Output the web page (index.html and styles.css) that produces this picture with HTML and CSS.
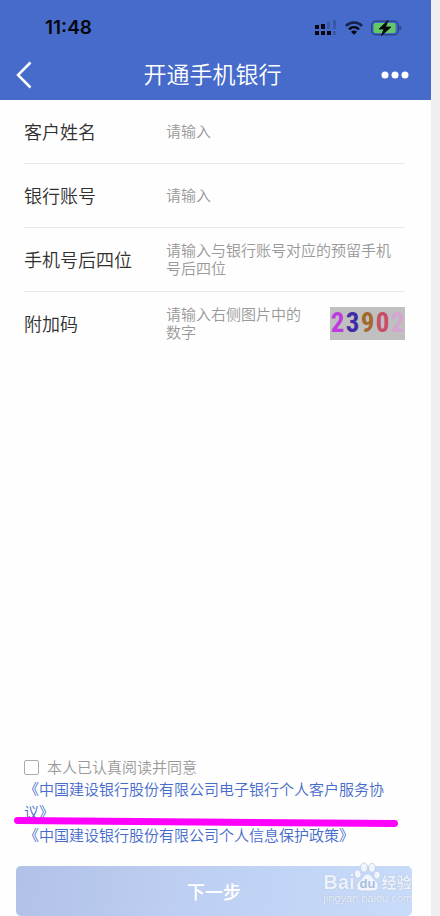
FILE: index.html
```html
<!DOCTYPE html>
<html lang="zh-CN">
<head>
<meta charset="utf-8">
<meta name="viewport" content="width=device-width, initial-scale=1">
<title>开通手机银行</title>
<link rel="stylesheet" href="styles.css">
</head>
<body>
<div class="screen">
  <header class="header">
    <div class="status">
      <span class="time">11:48</span>
      <div class="status-icons">
        <svg class="signal" width="22" height="16" viewBox="0 0 22 16" aria-hidden="true">
          <path d="M0 5h4v4H0zM6 4h4v5H6zM0 11h4v4H0zM6 11h4v4H6zM12 11h4v4h-4z" fill="#05070d"/>
          <path d="M12 2h3v7h-3zM18 0h3v9h-3zM18 11h3v4h-3z" fill="#3858a9"/>
        </svg>
        <svg class="wifi" width="18" height="14" viewBox="0 0 18 14" aria-hidden="true">
          <path d="M1 4.800C5.500.3 12.500.3 17 4.800" fill="none" stroke="#14224a" stroke-width="2.600"/>
          <path d="M4 8.300c3-2.800 7-2.800 10 0" fill="none" stroke="#05070d" stroke-width="2.500"/>
          <path d="M6 10.800q3-2.400 6 0l-3 3z" fill="#05070d"/>
        </svg>
        <svg class="battery" width="31" height="16" viewBox="0 0 31 16" aria-hidden="true">
          <rect x=".75" y="1.250" width="26.500" height="13.500" rx="4" fill="none" stroke="#2b4687" stroke-width="1.500"/>
          <rect x="2.500" y="3" width="22" height="10" rx="2" fill="#65c867"/>
          <path d="M28.500 5.500q2 .6 2 2.500t-2 2.500z" fill="#2b4687"/>
          <path d="M17 .5 8 9h5l-2.500 6.500L20 7h-5.500z" fill="#05070d" stroke="#05070d" stroke-width=".8"/>
        </svg>
      </div>
    </div>
    <nav class="navbar">
      <button class="icon-button" type="button" aria-label="返回">
        <svg width="16" height="28" viewBox="0 0 16 28"><path d="M14.500 1.500 2 14l12.500 12.500" fill="none" stroke="#fff" stroke-width="2.500"/></svg>
      </button>
      <h1 class="title">开通手机银行</h1>
      <button class="icon-button more" type="button" aria-label="更多">
        <svg width="28" height="8" viewBox="0 0 28 8" fill="#fff"><circle cx="4" cy="4" r="3.500"/><circle cx="14" cy="4" r="3.500"/><circle cx="24" cy="4" r="3.500"/></svg>
      </button>
    </nav>
  </header>

  <form class="form">
    <div class="fields">
      <div class="field">
        <label for="name">客户姓名</label>
        <input id="name" type="text" placeholder="请输入">
      </div>
      <div class="field">
        <label for="account">银行账号</label>
        <input id="account" type="text" placeholder="请输入">
      </div>
      <div class="field">
        <label for="phone">手机号后四位</label>
        <textarea id="phone" rows="2" placeholder="请输入与银行账号对应的预留手机号后四位"></textarea>
      </div>
      <div class="field">
        <label for="code">附加码</label>
        <textarea id="code" rows="2" placeholder="请输入右侧图片中的数字"></textarea>
        <div class="captcha"><span class="c1">2</span><span class="c2">3</span><span class="c3">9</span><span class="c4">0</span><span class="c5">2</span></div>
      </div>
    </div>

    <div class="bottom">
      <div class="agreement">
        <label class="agree"><input type="checkbox">本人已认真阅读并同意</label>
        <a href="#service">《中国建设银行股份有限公司电子银行个人客户服务协议》</a>
        <a href="#privacy">《中国建设银行股份有限公司个人信息保护政策》</a>
        <svg class="marker" viewBox="0 0 384 10" aria-hidden="true"><path d="M3.500 3.500 380.500 6.500" stroke="#ff00fb" stroke-width="7" stroke-linecap="round"/></svg>
      </div>
      <div class="action">
        <button class="submit" type="submit">下一步</button>
        <div class="watermark">
          <div class="brand">
            <span>Bai</span>
            <svg width="27" height="30" viewBox="0 0 27 30" aria-hidden="true">
              <g fill="#f1f5fc" stroke="#b9c8e4" stroke-width=".7">
                <ellipse cx="3.800" cy="12" rx="3.200" ry="4.200" transform="rotate(-12 4 12)"/>
                <ellipse cx="10" cy="5.500" rx="3.400" ry="4.600"/>
                <ellipse cx="18" cy="5.800" rx="3.300" ry="4.400"/>
                <ellipse cx="23" cy="13" rx="3.200" ry="4"/>
                <path d="M13.500 12c-4 0-4 4-7.500 6.500-4.500 3-4.500 10.500 2 10.500h11c6.500 0 6.500-7.500 2.500-10.500-3.500-2.500-4-6.500-8-6.500z"/>
              </g>
              <text class="du" x="13.500" y="26" text-anchor="middle">du</text>
            </svg>
            <span class="exp">经验</span>
          </div>
          <div class="domain">jingyan.baidu.com</div>
        </div>
      </div>
    </div>
  </form>
</div>
</body>
</html>
```
FILE: styles.css
```css
* {
  box-sizing: border-box;
}

body {
  margin: 0;
  padding-right: 9px;
  background: #efefef;
  font-family: "Noto Sans CJK SC", sans-serif;
  font-weight: 350;
}

button,
input,
textarea {
  font: inherit;
}

.screen {
  display: flex;
  flex-direction: column;
  min-height: 100vh;
  background: #fefefe;
}

.header {
  height: 100px;
  background: #466bca;
}

.status {
  display: flex;
  align-items: center;
  justify-content: space-between;
  height: 50px;
  padding: 6px 29px 0 45px;
}

.time {
  color: #05070d;
  font: 600 19px/24px Inter, sans-serif;
}

.status-icons {
  display: flex;
  align-items: center;
  gap: 8px;
}

.navbar {
  display: flex;
  align-items: center;
  justify-content: space-between;
  height: 50px;
  padding: 0 22px 0 16px;
}

.icon-button {
  display: flex;
  align-items: center;
  width: 28px;
  height: 44px;
  padding: 0;
  border: 0;
  background: none;
}

.title {
  margin: 0;
  padding-bottom: 4px;
  color: #fff;
  font-size: 23px;
  font-weight: 350;
  line-height: 32px;
}

.form {
  display: flex;
  flex: 1;
  flex-direction: column;
  justify-content: space-between;
}

.fields {
  padding: 0 26px 0 24px;
}

.field {
  display: flex;
  align-items: center;
  height: 64px;
  padding-bottom: 2px;
  border-bottom: 1px solid #e8e8e8;
}

.field:last-child {
  border-bottom: 0;
}

.field label {
  flex: none;
  width: 142px;
  color: #303030;
  font-size: 18px;
  line-height: 26px;
}

.field input,
.field textarea {
  flex: 1;
  min-width: 0;
  padding: 0;
  border: 0;
  outline: 0;
  background: none;
  color: #303030;
  font-size: 15px;
  line-height: 18px;
  resize: none;
  overflow: hidden;
}

.field textarea {
  height: 36px;
}

::placeholder {
  color: #999;
  opacity: 1;
}

.captcha {
  display: flex;
  flex: none;
  justify-content: space-around;
  width: 75px;
  height: 33px;
  margin-left: 22px;
  background: #c0c0c0;
  font: 700 27px/32px "Liberation Sans Narrow", "Roboto Condensed", "Noto Sans CJK SC", sans-serif;
}

.c1 { color: #be3be0; }
.c2 { color: #402aa5; }
.c3 { color: #a4672c; }
.c4 { color: #c94d67; }
.c5 { color: #d4a5d0; }

.agreement {
  position: relative;
  padding: 0 36px 20px 24px;
}

.agreement a {
  display: block;
  color: #466bca;
  font-size: 15px;
  line-height: 23px;
  text-decoration: none;
}

.agree {
  display: flex;
  align-items: center;
  gap: 8px;
  color: #999;
  font-size: 15px;
  line-height: 20px;
}

.agree input {
  appearance: none;
  width: 15px;
  height: 15px;
  margin: 0;
  border: 1px solid #aaa;
  border-radius: 2px;
  background: #fff;
}

.agree input:checked {
  background: #466bca;
}

.marker {
  position: absolute;
  top: 60px;
  left: 14px;
  width: calc(100% - 47px);
}

.action {
  position: relative;
  padding: 0 19px 0 16px;
}

.submit {
  display: block;
  width: 100%;
  height: 50px;
  padding: 0;
  border: 0;
  border-radius: 5px;
  background: linear-gradient(100deg, #b1c1e8, #bfd1f3 50%, #c8dbfa);
  color: #fff;
  font-size: 18px;
  font-weight: 500;
}

.watermark {
  position: absolute;
  right: 19px;
  bottom: 12px;
  color: #edf2fb;
  font-family: "Liberation Sans", sans-serif;
  text-shadow: 0 0 1px #91a5ca;
  pointer-events: none;
}

.brand {
  display: flex;
  align-items: flex-end;
  font-size: 20px;
  font-weight: 700;
  line-height: 20px;
}

.exp {
  font-family: "Noto Sans CJK SC", sans-serif;
  font-size: 15px;
}

.du {
  fill: #a9bddf;
  font: 700 13px "Liberation Sans", sans-serif;
  text-shadow: none;
}

.domain {
  font-size: 11px;
  line-height: 12px;
}
```
